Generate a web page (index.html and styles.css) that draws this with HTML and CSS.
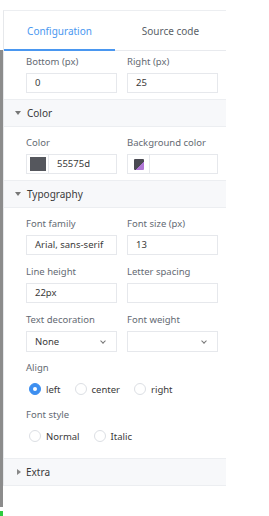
FILE: index.html
```html
<!DOCTYPE html>
<html>
<head>
<meta charset="utf-8">
<link rel="stylesheet" href="styles.css">
</head>
<body>
<div class="page">
  <div class="rail">
    <div class="rail-bar"></div>
    <div class="rail-end"></div>
  </div>
  <div class="panel">
    <div class="tabs">
      <div class="tab active">Configuration</div>
      <div class="tab">Source code</div>
    </div>
    <div class="section body first">
      <div class="row">
        <div class="field"><div class="label">Bottom (px)</div><div class="input">0</div></div>
        <div class="field"><div class="label">Right (px)</div><div class="input">25</div></div>
      </div>
    </div>
    <div class="head"><span class="tri down"></span>Color</div>
    <div class="section body">
      <div class="row">
        <div class="field"><div class="label">Color</div>
          <div class="input color"><span class="swatch-box"><span class="swatch"></span></span><span class="cval">55575d</span></div></div>
        <div class="field"><div class="label">Background color</div>
          <div class="input color"><span class="swatch-box"><span class="swatch none"></span></span><span class="cval"></span></div></div>
      </div>
    </div>
    <div class="head"><span class="tri down"></span>Typography</div>
    <div class="section body typo">
      <div class="row">
        <div class="field"><div class="label">Font family</div><div class="input">Arial, sans-serif</div></div>
        <div class="field"><div class="label">Font size (px)</div><div class="input">13</div></div>
      </div>
      <div class="row">
        <div class="field"><div class="label">Line height</div><div class="input">22px</div></div>
        <div class="field"><div class="label">Letter spacing</div><div class="input"></div></div>
      </div>
      <div class="row">
        <div class="field"><div class="label">Text decoration</div><div class="input select"><span>None</span><span class="chev"></span></div></div>
        <div class="field"><div class="label">Font weight</div><div class="input select"><span></span><span class="chev"></span></div></div>
      </div>
      <div class="group">
        <div class="label">Align</div>
        <div class="radios">
          <span class="radio checked"><span class="dot"></span>left</span>
          <span class="radio"><span class="dot"></span>center</span>
          <span class="radio"><span class="dot"></span>right</span>
        </div>
      </div>
      <div class="group last">
        <div class="label">Font style</div>
        <div class="radios">
          <span class="radio"><span class="dot"></span>Normal</span>
          <span class="radio"><span class="dot"></span>Italic</span>
        </div>
      </div>
    </div>
    <div class="head last"><span class="tri right"></span>Extra</div>
  </div>
</div>
</body>
</html>
```
FILE: styles.css
```css
* { box-sizing: border-box; }
html, body { margin: 0; padding: 0; background: #fff; }
body {
  font-family: "Noto Sans", "Open Sans", sans-serif;
  color: #333;
  width: 269px;
  height: 516px;
  overflow: hidden;
}
.page { display: flex; height: 516px; }
.rail { width: 3px; display: flex; flex-direction: column; }
.rail-bar { margin-top: 50px; height: 457px; background: #8c8c8c; }
.rail-end { margin-top: 4px; height: 5px; background: #2ecc40; }
.panel {
  width: 223px;
  margin-top: 10px;
  border-top: 1px solid #eceef1;
  border-left: 1px solid #e6e8eb;
  align-self: flex-start;
}
.tabs { display: flex; height: 40px; border-bottom: 1px solid #e8eaee; }
.tab {
  flex: 1;
  display: flex;
  align-items: center;
  justify-content: center;
  font-size: 10px;
  color: #5a5f67;
}
.tab.active { color: #4a97f0; border-bottom: 2px solid #4a97f0; margin-bottom: -1px; padding-top: 1px; }
.body { padding: 8px 8px 6px 22px; }
.body.first { padding-top: 3px; }
.row { display: flex; gap: 10px; margin-bottom: 9px; }
.body .row:last-child { margin-bottom: 0; }
.field { width: 91px; }
.label { font-size: 9.5px; line-height: 16px; color: #646a73; margin-bottom: 3px; }
.input {
  height: 20px;
  border: 1px solid #e6e8ec;
  font-size: 9.5px;
  line-height: 18px;
  padding: 0 8px;
  color: #3a3a3a;
  white-space: nowrap;
  overflow: hidden;
}
.input.color { display: flex; padding: 0; }
.swatch-box { width: 22px; border-right: 1px solid #e6e8ec; display: flex; align-items: center; justify-content: center; }
.swatch { width: 16px; height: 14px; background: #55575d; }
.swatch.none {
  width: 10px; height: 11px;
  background: linear-gradient(135deg, #4a4a52 0 60%, #b076d6 60% 100%);
  border-radius: 1px;
}
.cval { padding-left: 8px; }
.input.select { display: flex; justify-content: space-between; align-items: center; height: 21px; }
.chev {
  width: 4px; height: 4px;
  border-right: 1px solid #777;
  border-bottom: 1px solid #777;
  transform: rotate(45deg);
  margin-right: 3px;
  margin-top: -2px;
}
.head {
  height: 28px;
  background: #f7f8fa;
  border-top: 1px solid #eceef1;
  border-bottom: 1px solid #eceef1;
  display: flex;
  align-items: center;
  font-size: 10px;
  color: #3a3a3a;
  padding-left: 11px;
}
.tri { width: 0; height: 0; margin-right: 6px; }
.tri.down { border-left: 3px solid transparent; border-right: 3px solid transparent; border-top: 4px solid #777; }
.tri.right { border-top: 3px solid transparent; border-bottom: 3px solid transparent; border-left: 4px solid #888; margin-left: 2px; margin-right: 5px; }
.typo .row:nth-child(3) { margin-bottom: 8px; }
.group { margin-bottom: 8px; }
.group.last { margin-bottom: 6px; }
.group .label { margin-bottom: 3px; }
.radios { display: flex; height: 20px; align-items: center; padding-left: 3px; gap: 0; }
.radio { display: flex; align-items: center; font-size: 9.5px; color: #3a3a3a; margin-right: 14px; }
.dot {
  width: 12px; height: 12px; border-radius: 50%;
  border: 1px solid #dcdfe4;
  margin-right: 5px;
  position: relative;
}
.radio.checked .dot { background: #3d8ff0; border-color: #3d8ff0; }
.radio.checked .dot::after {
  content: ""; position: absolute; left: 3px; top: 3px; width: 4px; height: 4px; border-radius: 50%; background: #fff;
}
```
